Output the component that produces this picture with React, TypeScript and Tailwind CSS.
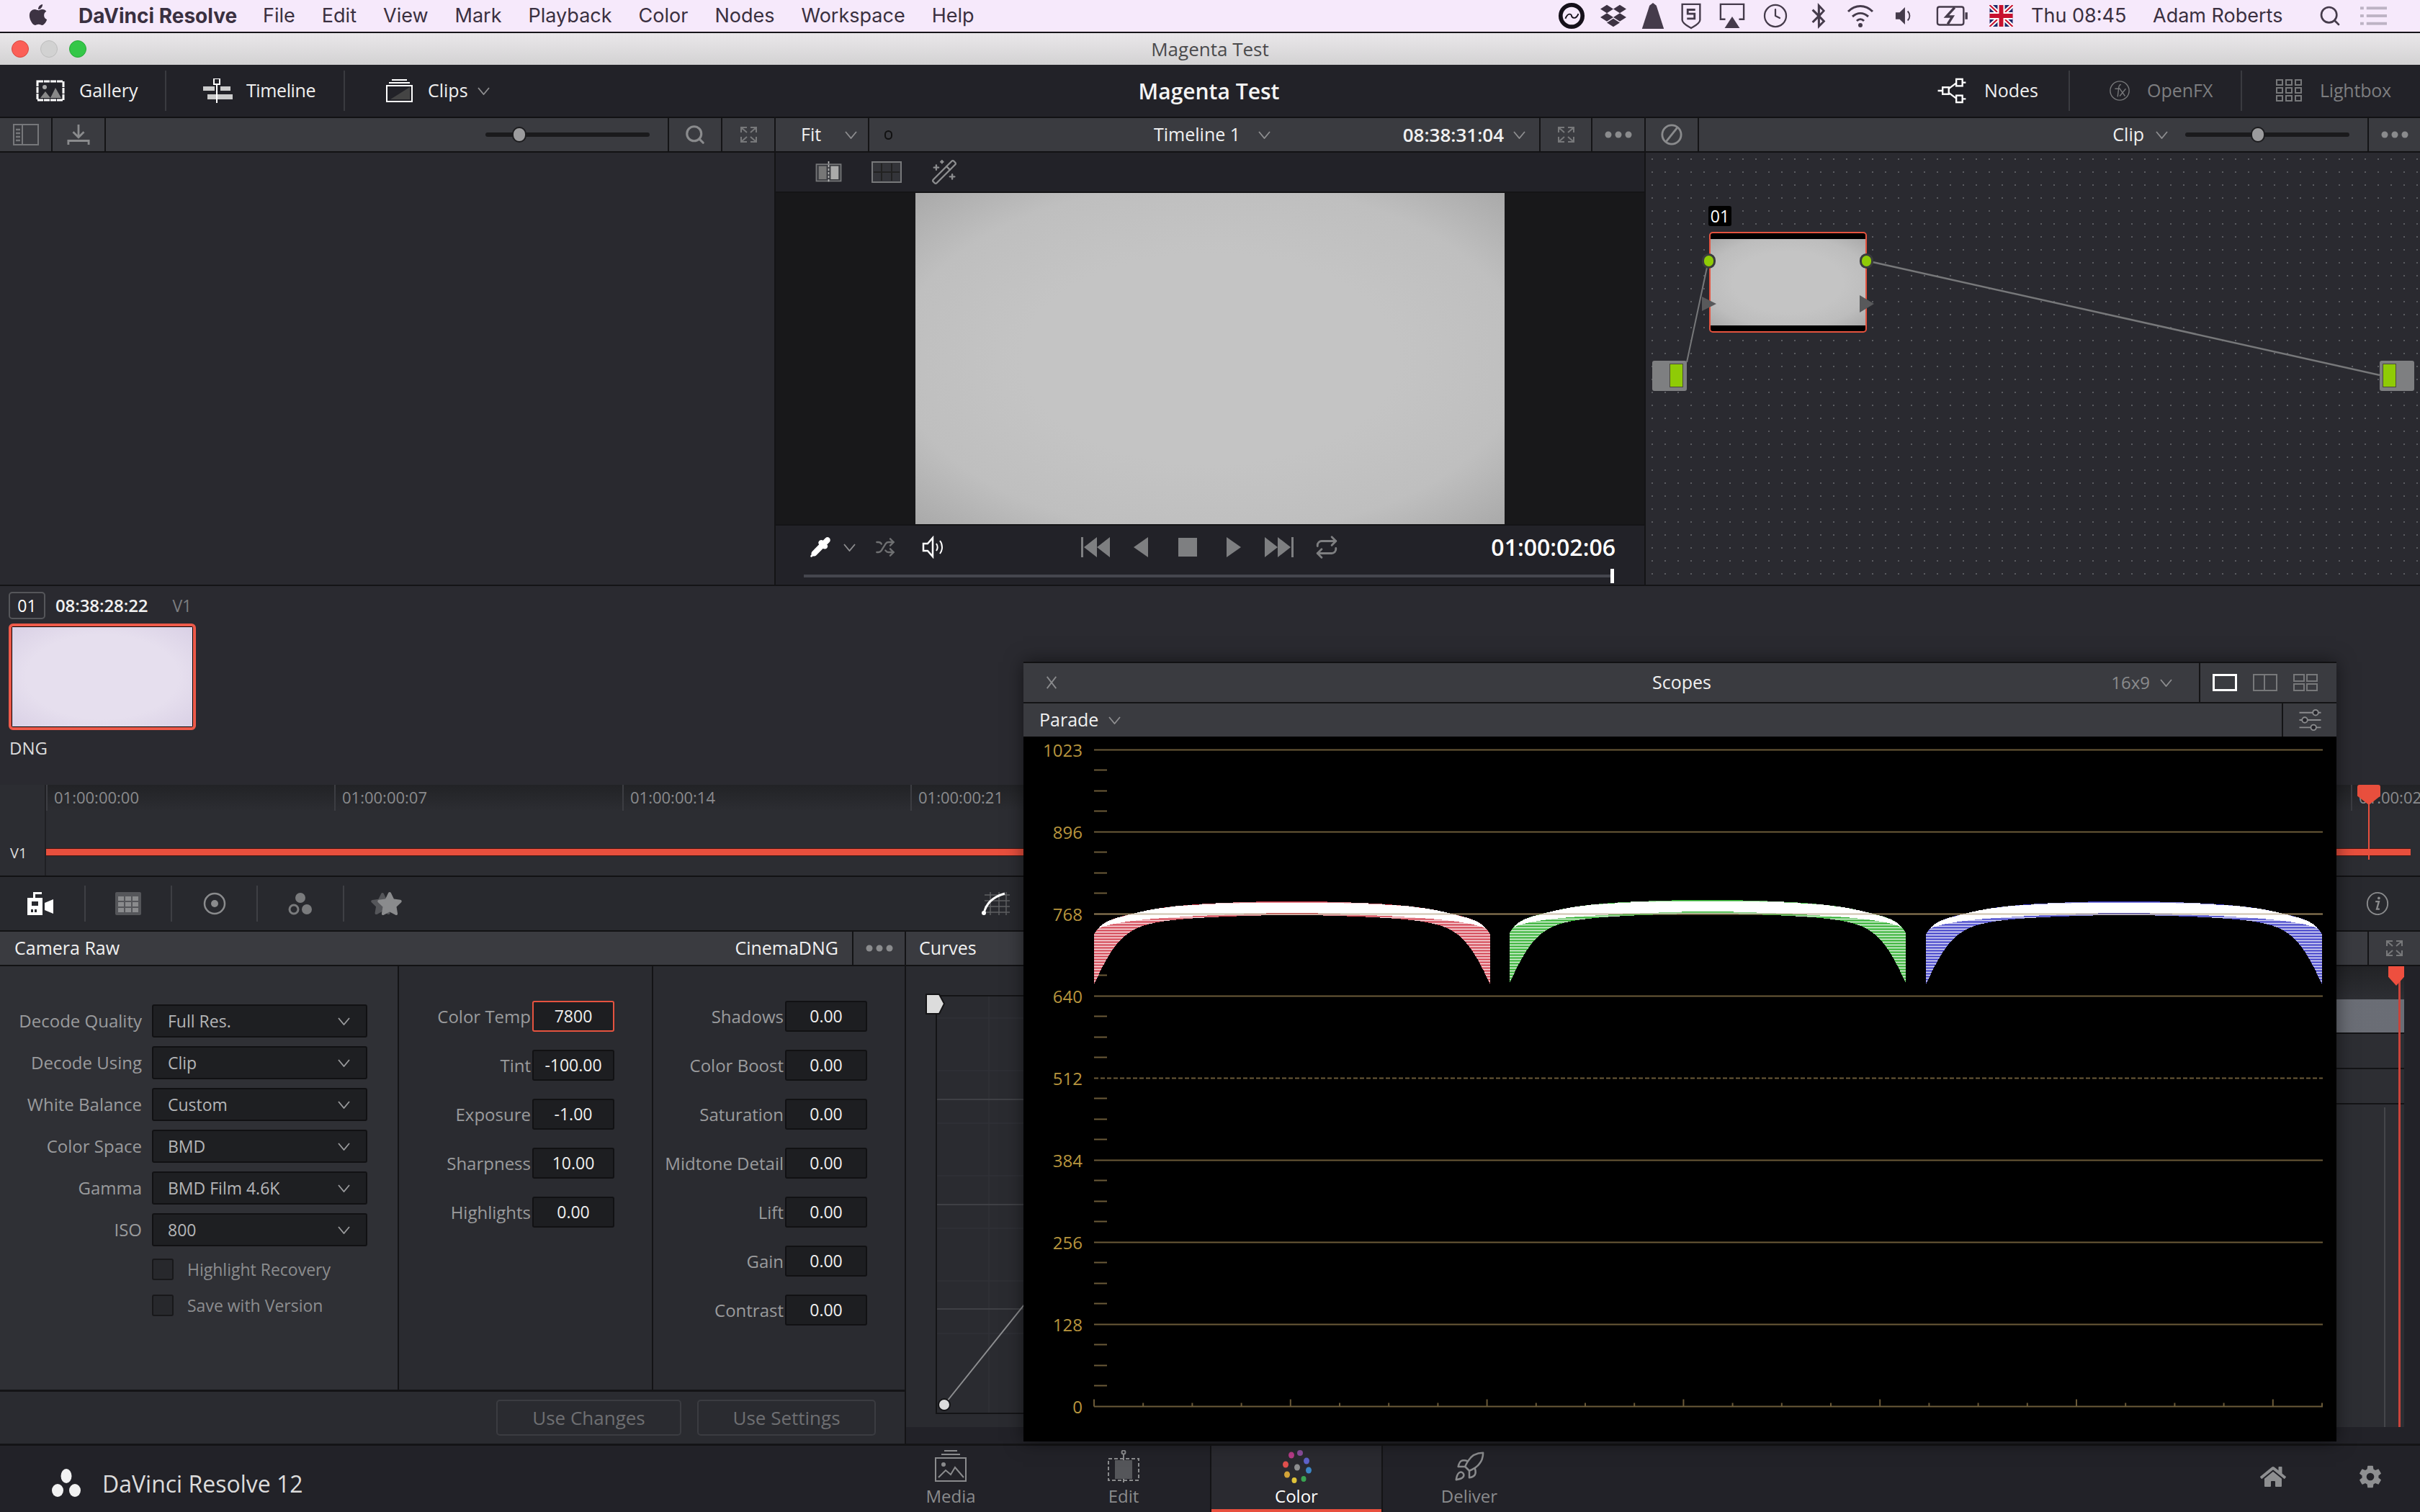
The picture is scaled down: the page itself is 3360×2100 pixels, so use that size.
import React from "react";
import { FaApple, FaDropbox, FaBluetoothB, FaHome, FaStar } from "react-icons/fa";
import { IoSettingsSharp } from "react-icons/io5";
import { Search, Shuffle, Repeat, Clock, WandSparkles, Pipette, Rocket } from "lucide-react";

const Chev = ({ className = "", color = "#8e8e90" }: { className?: string; color?: string }) => (
  <svg viewBox="0 0 17 11" className={`w-[17px] h-[11px] shrink-0 ${className}`} fill="none" stroke={color} strokeWidth="1.8"><path d="M1 1l7.5 9L16 1" /></svg>
);
const Expand = ({ className = "w-[25px] h-[24px]" }: { className?: string }) => (
  <svg viewBox="0 0 25 24" className={className} fill="none" stroke="#77787a" strokeWidth="2"><path d="M2 9V2h8M2 2l8 7M23 9V2h-8M23 2l-8 7M2 15v7h8M2 22l8-7M23 15v7h-8M23 22l-8-7" /></svg>
);
const Dots = () => (
  <svg viewBox="0 0 38 10" className="w-[38px] h-[10px]" fill="#8a8b8d"><circle cx="5" cy="5" r="4.5" /><circle cx="19" cy="5" r="4.5" /><circle cx="33" cy="5" r="4.5" /></svg>
);
const Slider = ({ className, knob }: { className: string; knob: string }) => (
  <div className={`relative h-[6px] rounded-full bg-[#1a1a1c] ${className}`}>
    <div className={`absolute top-[-8px] w-[20px] h-[22px] rounded-full bg-[#9b9b9d] border-2 border-[#1c1c1e] ${knob}`} />
  </div>
);

function MenuBar() {
  const items = ["File", "Edit", "View", "Mark", "Playback", "Color", "Nodes", "Workspace", "Help"];
  const slot = "flex items-center justify-center";
  return (
    <div className="h-[44px] shrink-0 flex items-center bg-[#f6e9fb] text-[#3a3040] font-['Inter',sans-serif] text-[27px]">
      <FaApple className="ml-[38px] w-[30px] h-[33px] mb-[3px] text-[#3d3343]" />
      <span className="ml-[41px] font-bold text-[28px]">DaVinci Resolve</span>
      <div className="flex ml-[36px] gap-[37px]">
        {items.map((m) => <span key={m}>{m}</span>)}
      </div>
      <div className="ml-auto flex items-center">
        <div className={`${slot} w-[60px]`}>
          <svg viewBox="0 0 40 40" className="w-[38px] h-[38px]" fill="none" stroke="#15101a"><circle cx="20" cy="20" r="16" strokeWidth="6" /><path d="M11 24c4-10 9-6 9-4s6 7 10-3" strokeWidth="5" stroke="#f6e9fb" /><path d="M11 24c4-10 9-6 9-4s6 7 10-3" strokeWidth="2" /></svg>
        </div>
        <div className={`${slot} w-[56px]`}><FaDropbox className="w-[36px] h-[36px] text-[#3d3343]" /></div>
        <div className={`${slot} w-[53px]`}><svg viewBox="0 0 34 40" className="w-[34px] h-[38px]" fill="#453b4b"><path d="M17 1l5 4 11 34H1L12 5z" /></svg></div>
        <div className={`${slot} w-[54px]`}>
          <svg viewBox="0 0 30 40" className="w-[30px] h-[38px]" fill="none" stroke="#453b4b" strokeWidth="2.5"><path d="M2 3h26v23c0 5-8 9-13 12C10 35 2 31 2 26z" /><path d="M21 11H10v6h10v7H9" strokeWidth="3" /></svg>
        </div>
        <div className={`${slot} w-[59px]`}>
          <svg viewBox="0 0 38 38" className="w-[36px] h-[36px]" fill="none" stroke="#453b4b" strokeWidth="2.5"><path d="M9 24H2V2h34v22h-7" /><path d="M19 20l11 17H8z" fill="#453b4b" stroke="none" /></svg>
        </div>
        <div className={`${slot} w-[61px]`}><Clock className="w-[36px] h-[38px] text-[#453b4b]" strokeWidth={1.5} /></div>
        <div className={`${slot} w-[60px]`}><FaBluetoothB className="w-[24px] h-[36px] text-[#453b4b]" /></div>
        <div className={`${slot} w-[56px]`}>
          <svg viewBox="0 0 40 36" className="w-[40px] h-[36px]" fill="none" stroke="#453b4b" strokeWidth="3"><path d="M3 12c10-10 24-10 34 0M9 19c7-6 15-6 22 0M15 25c3-3 7-3 10 0" /><circle cx="20" cy="31" r="3" fill="#453b4b" stroke="none" /></svg>
        </div>
        <div className={`${slot} w-[65px]`}>
          <svg viewBox="0 0 28 30" className="w-[26px] h-[30px]" fill="#453b4b"><path d="M1 10h6l8-8v26l-8-8H1z" /><path d="M19 8c4 4 4 10 0 14" fill="none" stroke="#453b4b" strokeWidth="2" /></svg>
        </div>
        <div className={`${slot} w-[70px]`}>
          <svg viewBox="0 0 48 32" className="w-[46px] h-[32px]" fill="none" stroke="#453b4b" strokeWidth="2.5"><rect x="2" y="3" width="38" height="26" rx="3" /><path d="M27 4L15 17h9l-7 11" strokeWidth="3.5" /><path d="M44 11v10" strokeWidth="3.5" /></svg>
        </div>
        <div className={`${slot} w-[64px]`}>
          <svg viewBox="0 0 32 30" className="w-[33px] h-[30px]"><rect width="32" height="30" fill="#1f2a6b" /><path d="M0 0l32 30M32 0L0 30" stroke="#fff" strokeWidth="6" /><path d="M0 0l32 30M32 0L0 30" stroke="#c8102e" strokeWidth="2" /><path d="M16 0v30M0 15h32" stroke="#fff" strokeWidth="10" /><path d="M16 0v30M0 15h32" stroke="#c8102e" strokeWidth="6" /></svg>
        </div>
        <span className="ml-[10px] w-[169px]">Thu 08:45</span>
        <span className="w-[230px]">Adam Roberts</span>
        <Search className="w-[32px] h-[36px] text-[#453b4b]" strokeWidth={2} />
        <svg viewBox="0 0 38 28" className="ml-[26px] mr-[46px] w-[37px] h-[28px]" fill="#bdb3c4"><rect x="0" y="1" width="5" height="4" /><rect x="0" y="12" width="5" height="4" /><rect x="0" y="23" width="5" height="4" /><rect x="9" y="1" width="29" height="4" /><rect x="9" y="12" width="29" height="4" /><rect x="9" y="23" width="29" height="4" /></svg>
      </div>
    </div>
  );
}

function TitleBar() {
  return (
    <div className="relative h-[46px] shrink-0 flex items-center justify-center border-t-2 border-[#17151a] bg-gradient-to-b from-[#eae8ea] to-[#d3d2d3] text-[#4a4a4c] text-[26px]">
      <div className="absolute left-[16px] top-[10px] flex gap-[16px]">
        <div className="w-[24px] h-[24px] rounded-full bg-[#fb5f57] border border-[#d8483f]" />
        <div className="w-[24px] h-[24px] rounded-full bg-[#d2d2d2] border border-[#bdbdbd]" />
        <div className="w-[24px] h-[24px] rounded-full bg-[#34c748] border border-[#27a838]" />
      </div>
      Magenta Test
    </div>
  );
}

function Toolbar() {
  return (
    <div className="h-[72px] shrink-0 grid grid-cols-[1fr_auto_1fr] items-center bg-[#222228] text-[25px] text-[#f0f0f0]">
      <div className="flex items-center h-[56px]">
        <div className="w-[231px] h-full flex items-center border-r-2 border-[#3a3b40] pl-[50px]">
          <svg viewBox="0 0 40 30" className="w-[40px] h-[30px]"><rect x="2" y="2" width="36" height="26" fill="#222228" stroke="#fff" strokeWidth="3" strokeDasharray="8 1" /><circle cx="12" cy="10" r="3" fill="#aaa" /><path d="M6 25l7-9 7 9zM20 25l7-14 8 14z" fill="#888" /></svg>
          <span className="ml-[20px]">Gallery</span>
        </div>
        <div className="w-[248px] h-full flex items-center border-r-2 border-[#3a3b40] pl-[50px]">
          <svg viewBox="0 0 42 34" className="w-[42px] h-[34px]"><rect x="1" y="11" width="16" height="6" fill="#ccc" /><rect x="25" y="11" width="14" height="6" fill="#ccc" /><rect x="7" y="22" width="35" height="7" fill="#ccc" /><rect x="19" y="6" width="2" height="28" fill="#fff" /><rect x="16" y="0" width="8" height="8" fill="#222228" stroke="#fff" strokeWidth="2" /></svg>
          <span className="ml-[19px] tracking-[-0.4px]">Timeline</span>
        </div>
        <div className="h-full flex items-center pl-[57px]">
          <svg viewBox="0 0 37 32" className="w-[37px] h-[32px]" fill="none" stroke="#fff" strokeWidth="2"><path d="M8 1h21M4 5h29" /><rect x="1" y="9" width="35" height="22" /><path d="M6 28l27-17v17z" fill="#444" stroke="none" /></svg>
          <span className="ml-[21px]">Clips</span>
          <Chev className="ml-[13px]" />
        </div>
      </div>
      <div className="text-[30px] font-semibold text-[#f4f4f4] pr-[3px]">Magenta Test</div>
      <div className="flex items-center justify-end h-[56px]">
        <svg viewBox="0 0 44 38" className="w-[43px] h-[36px]" fill="#222228" stroke="#fff" strokeWidth="2.5"><path d="M2 19h8M18 16l12-9M18 22l12 9M38 7h5M38 31h5" /><rect x="9" y="14" width="9" height="10" /><rect x="29" y="2" width="9" height="10" /><rect x="29" y="26" width="9" height="10" /></svg>
        <span className="ml-[24px] mr-[42px] font-medium">Nodes</span>
        <div className="w-[239px] h-full flex items-center border-l-2 border-[#3a3b40] pl-[54px] text-[#7d7e80]">
          <svg viewBox="0 0 32 32" className="w-[30px] h-[32px]" fill="none" stroke="#77787a" strokeWidth="1.5"><circle cx="16" cy="16" r="14" /><path d="M18 7c-4 0-3 4-5 18M9 13h8M16 13l8 11M25 13l-9 11" /></svg>
          <span className="ml-[23px]">OpenFX</span>
        </div>
        <div className="w-[249px] h-full flex items-center border-l-2 border-[#3a3b40] pl-[47px] text-[#7d7e80]">
          <svg viewBox="0 0 37 32" className="w-[37px] h-[32px]" fill="none" stroke="#77787a" strokeWidth="2">
            {[1, 14, 27].map((x) => [1, 12, 23].map((y) => <rect key={`${x}-${y}`} x={x} y={y} width="8" height="7" />))}
          </svg>
          <span className="ml-[24px] tracking-[-0.2px]">Lightbox</span>
        </div>
      </div>
    </div>
  );
}

const Header = ({ children, className = "" }: { children: React.ReactNode; className?: string }) => (
  <div className={`h-[50px] shrink-0 flex items-stretch border-y-2 border-[#121214] bg-[#3a3b40] text-[25px] text-[#f0f0f0] ${className}`}>{children}</div>
);
const Cell = ({ className = "", children }: { className?: string; children: React.ReactNode }) => (
  <div className={`flex items-center justify-center ${className}`}>{children}</div>
);

function Gallery() {
  return (
    <div className="w-[1075px] shrink-0 flex flex-col bg-[#29292f]">
      <Header>
        <Cell className="w-[73px] border-r-2 border-[#141416]">
          <svg viewBox="0 0 36 32" className="w-[36px] h-[32px]" fill="none" stroke="#76777a" strokeWidth="2"><rect x="1" y="2" width="34" height="28" /><path d="M13 2v28" /><path d="M4 9h6M4 14h6M4 19h6M4 24h6" strokeWidth="2.5" /></svg>
        </Cell>
        <Cell className="w-[74px] border-r-2 border-[#141416]">
          <svg viewBox="0 0 34 32" className="w-[32px] h-[32px]" fill="none" stroke="#8a8b8d" strokeWidth="3"><path d="M17 1v18M9 12l8 8 8-8M2 31v-6h30v6" /></svg>
        </Cell>
        <div className="flex-1 flex items-center pl-[527px]"><Slider className="w-[228px]" knob="left-[37px]" /></div>
        <Cell className="w-[74px] border-l-2 border-[#141416]"><Search className="w-[30px] h-[30px] text-[#8a8b8d]" strokeWidth={2.5} /></Cell>
        <Cell className="w-[74px] border-l-2 border-[#141416]"><Expand /></Cell>
      </Header>
      <div className="flex-1" />
    </div>
  );
}

function Viewer() {
  const gray = "#7e7f81";
  return (
    <div className="w-[1210px] shrink-0 flex flex-col border-x-2 border-[#141416] bg-[#222228]">
      <Header>
        <div className="w-[130px] flex items-center border-r-2 border-[#141416] pl-[35px]">
          <span>Fit</span><Chev className="ml-[33px]" />
        </div>
        <div className="flex-1 flex items-center pl-[21px]">
          <div className="w-[11px] h-[13px] rounded-full border-2 border-[#111]" />
          <span className="ml-[363px]">Timeline 1</span>
          <Chev className="ml-[25px]" />
          <span className="ml-auto font-semibold text-[26px]">08:38:31:04</span>
          <Chev className="ml-[13px] mr-[19px]" />
        </div>
        <Cell className="w-[74px] border-x-2 border-[#141416]"><Expand /></Cell>
        <Cell className="w-[72px]"><Dots /></Cell>
      </Header>
      <div className="h-[56px] shrink-0 flex items-center pl-[52px] border-b-2 border-[#141416]">
        <svg viewBox="0 0 43 36" className="w-[43px] h-[30px]" fill="none"><rect x="1" y="5" width="41" height="28" fill="#3a3b40" stroke="#77787a" strokeWidth="2" /><rect x="5" y="8" width="13" height="22" fill="#777" /><rect x="25" y="8" width="13" height="22" fill="#aaa" /><path d="M21.5 0v36" stroke="#bbb" strokeWidth="2" strokeDasharray="4 2" /></svg>
        <svg viewBox="0 0 42 30" className="ml-[38px] w-[42px] h-[30px]" fill="none" stroke="#77787a" strokeWidth="2"><rect x="1" y="1" width="40" height="28" fill="#333439" /><path d="M14 3v24M28 3v24M3 15h36" stroke="#222" /></svg>
        <WandSparkles className="ml-[39px] w-[40px] h-[38px] text-[#8c8d8f]" strokeWidth={1.5} />
      </div>
      <div className="h-[460px] shrink-0 flex justify-center bg-[#18181a]">
        <div className="w-[818px] h-full bg-[radial-gradient(ellipse_at_center,#c4c4c4_45%,#bfbfbf_75%,#a9a9a9_100%)]" />
      </div>
      <div className="flex-1 flex flex-col border-t-2 border-[#141416]">
        <div className="h-[60px] flex items-center">
          <Pipette className="ml-[47px] w-[30px] h-[32px] text-white" fill="#fff" strokeWidth={2} />
          <Chev className="ml-[17px]" />
          <Shuffle className="ml-[26px] w-[30px] h-[28px] text-[#6f7072]" strokeWidth={2} />
          <svg viewBox="0 0 31 32" className="ml-[36px] w-[31px] h-[32px]" fill="none" stroke="#fff" strokeWidth="2.5"><path d="M2 11h6l7-8v26l-7-8H2z" /><path d="M20 11c2 3 2 7 0 10M25 7c4 5 4 13 0 18" strokeWidth="2" /></svg>
          <svg viewBox="0 0 40 28" className="ml-[190px] w-[40px] h-[28px]" fill={gray}><rect x="0" y="0" width="3" height="28" /><path d="M4 14L22 0v28zM22 14L40 0v28z" /></svg>
          <svg viewBox="0 0 20 28" className="ml-[33px] w-[20px] h-[28px]" fill={gray}><path d="M0 14L20 0v28z" /></svg>
          <div className="ml-[42px] w-[26px] h-[26px] bg-[#7e7f81]" />
          <svg viewBox="0 0 20 28" className="ml-[41px] w-[20px] h-[28px]" fill={gray}><path d="M20 14L0 0v28z" /></svg>
          <svg viewBox="0 0 40 28" className="ml-[33px] w-[40px] h-[28px]" fill={gray}><rect x="37" y="0" width="3" height="28" /><path d="M36 14L18 0v28zM18 14L0 0v28z" /></svg>
          <Repeat className="ml-[28px] w-[36px] h-[34px] text-[#7e7f81]" strokeWidth={2} />
          <span className="ml-auto mr-[40px] font-semibold text-[32px] text-white">01:00:02:06</span>
        </div>
        <div className="flex items-center pl-[39px]">
          <div className="w-[1120px] h-[4px] bg-[#45464e]" />
          <div className="w-[5px] h-[20px] bg-white" />
        </div>
      </div>
    </div>
  );
}

function Nodes() {
  return (
    <div className="flex-1 flex flex-col bg-[#2a2a30]">
      <Header>
        <Cell className="w-[74px] border-r-2 border-[#141416]">
          <svg viewBox="0 0 32 32" className="w-[30px] h-[32px]" fill="none" stroke="#8a8b8d" strokeWidth="3"><circle cx="16" cy="16" r="14" /><path d="M8 26L24 6" /></svg>
        </Cell>
        <div className="flex-1 flex items-center justify-end">
          <span className="mr-[16px]">Clip</span>
          <Chev className="mr-[24px]" />
          <Slider className="w-[228px]" knob="left-[91px]" />
          <div className="w-[25px]" />
        </div>
        <Cell className="w-[73px] border-l-2 border-[#141416]"><Dots /></Cell>
      </Header>
      <div className="relative flex-1 bg-[radial-gradient(circle,#5b5c61_1px,transparent_1.5px)] bg-[size:18px_18px]">
        <svg className="absolute inset-0 w-full h-full" fill="none" stroke="#77787a" strokeWidth="2">
          <path d="M57 291L87 150" />
          <path d="M306 150L1019 309" strokeWidth="2.5" />
        </svg>
        <div className="absolute left-[87px] top-[74px] w-[32px] h-[28px] bg-black rounded-[3px] flex items-center justify-center text-white text-[23px]">01</div>
        <div className="absolute left-[88px] top-[110px] w-[219px] h-[140px] rounded-[5px] border-2 border-[#e5533f] bg-black py-[8px]">
          <div className="h-full bg-[radial-gradient(ellipse_at_center,#c4c4c4_50%,#bdbdbd_75%,#a9a9a9_100%)]" />
        </div>
        <div className="absolute left-[78px] top-[140px] w-[19px] h-[21px] rounded-full bg-[#8fcb06] border-[3px] border-[#3a3b3d]" />
        <div className="absolute left-[297px] top-[140px] w-[19px] h-[21px] rounded-full bg-[#8fcb06] border-[3px] border-[#3a3b3d]" />
        <svg viewBox="0 0 20 24" className="absolute left-[78px] top-[198px] w-[20px] h-[24px]" fill="#58595b"><path d="M0 2l20 10L0 22z" /></svg>
        <svg viewBox="0 0 20 24" className="absolute left-[297px] top-[198px] w-[20px] h-[24px]" fill="#58595b"><path d="M0 0l20 12L0 24z" /></svg>
        <div className="absolute left-[9px] top-[289px] w-[48px] h-[42px] rounded-[3px] bg-[#7e7f81]">
          <div className="ml-[24px] mt-[4px] w-[19px] h-[33px] bg-[#8fcb06] border border-[#4a4b3a]" />
        </div>
        <div className="absolute left-[1019px] top-[289px] w-[48px] h-[42px] rounded-[3px] bg-[#7e7f81]">
          <div className="ml-[4px] mt-[4px] w-[19px] h-[33px] bg-[#8fcb06] border border-[#4a4b3a]" />
        </div>
      </div>
    </div>
  );
}

function ClipArea() {
  return (
    <div className="h-[278px] shrink-0 border-t-2 border-[#141416] bg-[#2a2a30] pl-[12px] pt-[8px]">
      <div className="flex items-center h-[38px] text-[23px]">
        <div className="w-[51px] h-[38px] rounded-[5px] border-2 border-[#55565a] flex items-center justify-center text-white">01</div>
        <span className="ml-[14px] font-semibold text-[24px] text-[#f0f0f0] tracking-[-0.1px]">08:38:28:22</span>
        <span className="ml-[34px] text-[#7d7e80]">V1</span>
      </div>
      <div className="mt-[6px] w-[260px] h-[148px] rounded-[6px] border-[4px] border-[#ee5a4a] bg-black p-[1px]">
        <div className="w-full h-full bg-[radial-gradient(ellipse_at_center,#e6dfee_60%,#d9d0e5_100%)]" />
      </div>
      <div className="mt-[7px] pl-[1px] text-[24px] text-[#dcdcdc]">DNG</div>
    </div>
  );
}

function Timeline() {
  const labels = ["01:00:00:00", "01:00:00:07", "01:00:00:14", "01:00:00:21", "01:00:01:04", "01:00:01:11", "01:00:01:18", "01:00:02:01", "01:00:02:08"];
  return (
    <div className="relative h-[128px] shrink-0 flex bg-[#2c2d32] border-b-[2px] border-[#121214]">
      <div className="w-[64px] shrink-0 flex flex-col justify-end border-r-2 border-[#202024] pb-[16px] pl-[14px] text-[20px] text-[#dcdcdc]">V1</div>
      <div className="flex-1 flex flex-col overflow-hidden">
        <div className="h-[36px] flex bg-gradient-to-b from-[#222326] to-[#2c2d32] text-[22px] text-[#8a8b8d]">
          {labels.map((l) => <div key={l} className="w-[400px] shrink-0 pl-[9px] border-l-2 border-[#3c3d42] leading-[34px]">{l}</div>)}
        </div>
        <div className="mt-[52px] mr-[13px] h-[11px] bg-[#e84f3d] border-y border-[#451713]" />
      </div>
      <div className="absolute left-[3273px] top-[0px] w-[32px] h-[28px] bg-[#e84f3d] rounded-t-[3px] [clip-path:polygon(0_0,100%_0,100%_55%,50%_100%,0_55%)]" />
      <div className="absolute left-[3288px] top-[24px] w-[2px] h-[80px] bg-[#e84f3d]" />
    </div>
  );
}

function Palette() {
  return (
    <div className="h-[74px] shrink-0 flex items-center bg-[#28292e]">
      <div className="w-[119px] h-[50px] flex items-center justify-center border-r-2 border-[#3e3f44]">
        <svg viewBox="0 0 46 32" className="w-[46px] h-[32px] ml-[4px]" fill="#fff"><path d="M8 0h12v3H11v5h10v24H0V8h8z" /><path d="M24 15l12-5v20l-12-5z" /><rect x="6" y="13" width="9" height="6" fill="#28292e" /><rect x="5" y="24" width="3" height="4" fill="#28292e" /><rect x="10" y="24" width="3" height="4" fill="#28292e" /></svg>
      </div>
      <div className="w-[120px] h-[50px] flex items-center justify-center border-r-2 border-[#3e3f44]">
        <svg viewBox="0 0 36 32" className="w-[36px] h-[32px]" fill="#8a8b8d"><rect width="36" height="32" rx="2" fill="#55565a" /><rect x="4" y="6" width="8" height="6" /><rect x="14" y="6" width="8" height="6" /><rect x="24" y="6" width="8" height="6" /><rect x="4" y="14" width="8" height="6" /><rect x="14" y="14" width="8" height="6" /><rect x="24" y="14" width="8" height="6" /><rect x="4" y="22" width="8" height="6" /><rect x="14" y="22" width="8" height="6" /><rect x="24" y="22" width="8" height="6" /></svg>
      </div>
      <div className="w-[119px] h-[50px] flex items-center justify-center border-r-2 border-[#3e3f44]">
        <svg viewBox="0 0 32 32" className="w-[32px] h-[32px]" fill="none" stroke="#8a8b8d" strokeWidth="2.5"><circle cx="16" cy="16" r="14" /><circle cx="16" cy="16" r="5" fill="#8a8b8d" stroke="none" /></svg>
      </div>
      <div className="w-[120px] h-[50px] flex items-center justify-center border-r-2 border-[#3e3f44]">
        <svg viewBox="0 0 36 32" className="w-[36px] h-[32px]" fill="#7a7b7d"><circle cx="18" cy="8" r="7" /><circle cx="9" cy="24" r="6" fill="none" stroke="#7a7b7d" strokeWidth="3" /><circle cx="27" cy="24" r="7" /></svg>
      </div>
      <div className="relative w-[120px] flex items-center justify-center">
        <FaStar className="absolute left-[36px] w-[34px] h-[32px] text-[#55565a]" />
        <FaStar className="relative ml-[6px] w-[36px] h-[34px] text-[#8a8b8d]" />
      </div>
      <div className="ml-[763px] w-[41px] h-[32px]">
        <svg viewBox="0 0 41 32" className="w-[41px] h-[32px]" fill="none"><path d="M6 4h35M6 12h35M6 20h35M6 28h35M14 0v32M26 0v32M36 0v32" stroke="#5e5f62" strokeWidth="1.5" /><path d="M5 30C8 14 20 6 34 2" stroke="#fff" strokeWidth="3" /><circle cx="5" cy="29" r="3" fill="#fff" /></svg>
      </div>
      <svg viewBox="0 0 32 36" className="ml-auto mr-[43px] w-[32px] h-[34px]" fill="none" stroke="#8a8b8d" strokeWidth="2"><ellipse cx="16" cy="18" rx="15" ry="16" /><circle cx="18" cy="10" r="2" fill="#8a8b8d" stroke="none" /><path d="M13 15h5l-3 11h4" strokeWidth="2.5" /></svg>
    </div>
  );
}

const Dropdown = ({ label, value }: { label: string; value: string }) => (
  <div className="flex items-center">
    <span className="w-[197px] text-right text-[#9a9b9d] text-[24px] whitespace-nowrap">{label}</span>
    <div className="ml-[14px] w-[299px] h-[46px] flex items-center justify-between pl-[20px] pr-[22px] rounded-[3px] border-2 border-[#111113] bg-[#1e1f22] text-[23px] text-[#b4b5b7]">
      <span>{value}</span>
      <Chev color="#9a9b9d" />
    </div>
  </div>
);
const Check = ({ label }: { label: string }) => (
  <div className="h-[30px] flex items-center pl-[211px]">
    <div className="w-[30px] h-[30px] rounded-[3px] border-2 border-[#18181a] bg-[#27282c]" />
    <span className="ml-[19px] text-[23px] text-[#8c8d8f]">{label}</span>
  </div>
);
const Num = ({ label, value, active = false, width }: { label: string; value: string; active?: boolean; width: string }) => (
  <div className="flex items-center">
    <span className={`${width} text-right text-[24px] text-[#9a9b9d] whitespace-nowrap`}>{label}</span>
    <div className={`ml-[2px] w-[114px] h-[43px] rounded-[3px] border-2 flex items-center justify-center text-[23px] text-[#eeeeee] bg-[#1d1e21] ${active ? "border-[#e5533f]" : "border-[#111113]"}`}>{value}</div>
  </div>
);

function CameraRaw() {
  return (
    <div className="w-[1258px] shrink-0 flex flex-col bg-[#2a2b30] border-r-2 border-[#141416]">
      <Header>
        <div className="flex-1 flex items-center pl-[20px]">Camera Raw</div>
        <div className="flex items-center pr-[19px]">CinemaDNG</div>
        <Cell className="w-[73px] border-l-2 border-[#141416]"><Dots /></Cell>
      </Header>
      <div className="flex-1 flex">
        <div className="w-[554px] shrink-0 border-r-2 border-[#141416] flex flex-col bg-[#2f3035] pt-[53px]">
          <div className="flex flex-col gap-[12px]">
            <Dropdown label="Decode Quality" value="Full Res." />
            <Dropdown label="Decode Using" value="Clip" />
            <Dropdown label="White Balance" value="Custom" />
            <Dropdown label="Color Space" value="BMD" />
            <Dropdown label="Gamma" value="BMD Film 4.6K" />
            <Dropdown label="ISO" value="800" />
          </div>
          <div className="mt-[17px] flex flex-col gap-[20px]">
            <Check label="Highlight Recovery" />
            <Check label="Save with Version" />
          </div>
        </div>
        <div className="w-[353px] shrink-0 border-r-2 border-[#141416] flex flex-col gap-[25px] pt-[48px]">
          <Num width="w-[183px]" label="Color Temp" value="7800" active />
          <Num width="w-[183px]" label="Tint" value="-100.00" />
          <Num width="w-[183px]" label="Exposure" value="-1.00" />
          <Num width="w-[183px]" label="Sharpness" value="10.00" />
          <Num width="w-[183px]" label="Highlights" value="0.00" />
        </div>
        <div className="flex-1 flex flex-col gap-[25px] pt-[48px]">
          <Num width="w-[181px]" label="Shadows" value="0.00" />
          <Num width="w-[181px]" label="Color Boost" value="0.00" />
          <Num width="w-[181px]" label="Saturation" value="0.00" />
          <Num width="w-[181px]" label="Midtone Detail" value="0.00" />
          <Num width="w-[181px]" label="Lift" value="0.00" />
          <Num width="w-[181px]" label="Gain" value="0.00" />
          <Num width="w-[181px]" label="Contrast" value="0.00" />
        </div>
      </div>
      <div className="h-[75px] shrink-0 flex items-center justify-end pr-[40px] gap-[22px] border-t-[3px] border-[#141416] bg-[#2a2b30] text-[26px] text-[#6e6f72]">
        <div className="w-[257px] h-[50px] rounded-[5px] border-2 border-[#3b3c41] flex items-center justify-center">Use Changes</div>
        <div className="w-[248px] h-[50px] rounded-[5px] border-2 border-[#3b3c41] flex items-center justify-center">Use Settings</div>
      </div>
    </div>
  );
}

function CurvesPanel() {
  return (
    <div className="flex-1 flex flex-col bg-[#222228]">
      <Header>
        <div className="flex-1 flex items-center pl-[18px]">Curves</div>
        <div className="w-[70px] flex items-center"><div className="w-[18px] h-[6px] bg-[#1a1a1c] rounded-r-full" /></div>
        <Cell className="w-[73px] border-l-2 border-[#141416]"><Expand /></Cell>
      </Header>
      <div className="flex-1 flex pr-[22px] pb-[23px]">
        <div className="w-[1000px] shrink-0 bg-[#2a2b30]">
          <svg viewBox="0 0 1000 640" className="w-[1000px] h-[640px]" fill="none">
            <g stroke="#313237" strokeWidth="1.5">
              {[72, 145, 218, 291, 364, 437, 510].map((y) => <path key={y} d={`M42 ${y}H1000`} />)}
              {[115, 188, 260, 332, 405, 478].map((x) => <path key={x} d={`M${x} 41V620`} />)}
            </g>
            <g stroke="#3f4045" strokeWidth="2">
              <path d="M42 185H1000M42 331H1000M42 476H1000" />
            </g>
            <path d="M42 41H1000M42 41V621H1000" stroke="#141416" strokeWidth="2" />
            <path d="M53 609L300 300" stroke="#8e8f91" strokeWidth="2" />
            <path d="M28 39h18l7 13-7 14H28z" fill="#dcdcdc" stroke="#141416" strokeWidth="2" />
            <circle cx="53" cy="609" r="8" fill="#dcdcdc" stroke="#141416" strokeWidth="2" />
          </svg>
        </div>
        <div className="relative flex-1 flex flex-col bg-[#2d2e33]">
          <div className="h-[46px] bg-gradient-to-b from-[#222326] to-[#2d2e33]" />
          <div className="h-[48px] bg-gradient-to-r from-[#70737b] to-[#6a6d75] border-b-2 border-[#141416]" />
          <div className="h-[49px] border-b-2 border-[#141416]" />
          <div className="h-[49px] border-b-2 border-[#141416]" />
          <div className="absolute right-[26px] top-[196px] bottom-0 w-[2px] bg-[#45464a]" />
          <div className="absolute right-[5px] top-0 bottom-0 w-[3px] bg-[#c9433a]" />
          <div className="absolute right-0 top-0 w-[22px] h-[27px] bg-[#ee4f3f] [clip-path:polygon(0_0,100%_0,100%_55%,50%_100%,0_55%)]" />
        </div>
      </div>
    </div>
  );
}

const TRACE_BODY = "M0 118L0 48C10 30 25 26 60 18C100 8 150 4 275 2C400 4 450 8 490 18C525 26 540 30 550 48L550 118C535 85 520 55 495 42C470 28 420 24 275 21C130 24 80 28 55 42C30 55 15 85 0 118Z";
const TRACE_BAND = "M6 40C16 28 30 26 60 18C100 8 150 5 275 4C400 5 450 8 490 18C520 26 534 28 544 40C520 30 470 23 275 18C80 23 30 30 6 40Z";

const Trace = ({ x, y, fill, id }: { x: number; y: number; fill: string; id: string }) => (
  <g transform={`translate(${x} ${y})`} shapeRendering="crispEdges">
    <path d={TRACE_BODY} fill={fill} />
    <path d={TRACE_BODY} fill={`url(#${id})`} />
    <path d={TRACE_BAND} fill="#fff" />
  </g>
);

function Scopes() {
  const majors = [
    ["1023", 18], ["896", 132], ["768", 246], ["640", 360], ["512", 474], ["384", 588], ["256", 702], ["128", 816],
  ] as [string, number][];
  return (
    <div className="absolute left-[1421px] top-[919px] w-[1823px] h-[1083px] flex flex-col border-t-2 border-[#111113] bg-black shadow-[0_0_24px_rgba(0,0,0,0.5)]">
      <div className="relative h-[56px] shrink-0 flex items-center bg-[#3a3b40] border-b-2 border-[#141416] text-[25px]">
        <svg viewBox="0 0 16 20" className="ml-[31px] w-[16px] h-[18px]" fill="none" stroke="#8a8b8d" strokeWidth="2"><path d="M1 1l14 18M15 1L1 19" /></svg>
        <span className="absolute left-[873px] text-[#f0f0f0]">Scopes</span>
        <span className="ml-auto text-[#8a8b8d] text-[24px]">16x9</span>
        <Chev className="ml-[14px] mr-[37px]" />
        <div className="h-full w-[191px] flex items-center border-l-2 border-[#141416] pl-[17px] gap-[22px]">
          <div className="w-[34px] h-[24px] border-[3px] border-white" />
          <div className="w-[34px] h-[24px] border-2 border-[#77787a] flex"><div className="w-1/2 border-r-2 border-[#77787a]" /></div>
          <svg viewBox="0 0 34 24" className="w-[34px] h-[24px]" fill="none" stroke="#77787a" strokeWidth="2"><rect x="1" y="1" width="14" height="9" /><rect x="19" y="1" width="14" height="9" /><rect x="1" y="14" width="14" height="9" /><rect x="19" y="14" width="14" height="9" /></svg>
        </div>
      </div>
      <div className="h-[46px] shrink-0 flex items-center bg-[#3a3b40] text-[25px] text-[#f0f0f0]">
        <span className="ml-[22px]">Parade</span>
        <Chev className="ml-[14px]" />
        <div className="ml-auto h-full w-[76px] flex items-center justify-center border-l-2 border-[#141416]">
          <svg viewBox="0 0 34 32" className="w-[33px] h-[30px]" fill="#222228" stroke="#8a8b8d" strokeWidth="2"><path d="M1 5h32M1 16h32M1 27h32" /><circle cx="25" cy="5" r="4" /><circle cx="9" cy="16" r="4" /><circle cx="22" cy="27" r="4" /></svg>
        </div>
      </div>
      <svg viewBox="0 0 1823 978" className="flex-1 w-full h-[978px]" fill="none">
        <defs>
          <pattern id="stripes" width="4" height="4" patternUnits="userSpaceOnUse"><rect width="4" height="2" fill="#fff" fillOpacity="0.75" /></pattern>
        </defs>
        <g stroke="#6b5a38" strokeWidth="2">
          {majors.map(([l, y]) => <path key={l} d={`M98 ${y}H1804`} strokeDasharray={l === "512" ? "6 3" : undefined} />)}
          {majors.map(([l, y]) => [28, 57, 85].map((d) => <path key={`${l}${d}`} d={`M98 ${y + d}H116`} />))}
          <path d="M98 930H1804" />
          {Array.from({ length: 26 }, (_, i) => 98 + i * 68.2).map((x, i) => <path key={x} d={`M${x} 930v${i % 4 === 0 ? -10 : -5}`} />)}
        </g>
        <Trace x={98} y={226} fill="#d2404f" id="stripes" />
        <Trace x={675} y={224} fill="#2fb02f" id="stripes" />
        <Trace x={1253} y={226} fill="#3d3dc8" id="stripes" />
        <path d="M98 246H1804" stroke="#a5906a" strokeOpacity="0.55" strokeWidth="2" />
        {majors.map(([l, y]) => <text key={l} x="82" y={y + 9} textAnchor="end" fill="#b8953e" fontSize="24" fontFamily="'Open Sans', sans-serif">{l}</text>)}
        <text x="82" y="939" textAnchor="end" fill="#b8953e" fontSize="24" fontFamily="'Open Sans', sans-serif">0</text>
      </svg>
    </div>
  );
}

function Footer() {
  const tab = "w-[240px] h-full flex flex-col items-center justify-start pt-[6px] text-[24px] text-[#8a8b8d]";
  return (
    <div className="h-[95px] shrink-0 flex border-t-[3px] border-[#141416] bg-[#222228]">
      <div className="w-[1200px] shrink-0 flex items-center pl-[72px] pt-[14px] text-[32px] text-[#dcdcdc]">
        <svg viewBox="0 0 40 40" className="w-[40px] h-[40px] mb-[2px]" fill="#f2f2f2"><ellipse cx="20" cy="10" rx="7.5" ry="10" /><ellipse cx="8" cy="30" rx="8" ry="9" /><ellipse cx="32" cy="30" rx="8" ry="9" /></svg>
        <span className="ml-[30px]">DaVinci Resolve 12</span>
      </div>
      <div className={tab}>
        <svg viewBox="0 0 46 46" className="w-[46px] h-[46px]" fill="none" stroke="#8a8b8d" strokeWidth="2"><path d="M14 1h18M10 6h26" /><rect x="2" y="11" width="42" height="32" /><circle cx="13" cy="20" r="3" fill="#8a8b8d" stroke="none" /><path d="M6 38l10-10 7 6 6-10 12 14" /></svg>
        <span>Media</span>
      </div>
      <div className={tab}>
        <svg viewBox="0 0 46 46" className="w-[46px] h-[46px]" fill="none" stroke="#8a8b8d" strokeWidth="2"><circle cx="23" cy="3" r="2.5" /><path d="M23 5v40" /><rect x="2" y="12" width="42" height="30" strokeDasharray="5 3" /><rect x="11" y="14" width="24" height="26" fill="#55565a" stroke="none" /></svg>
        <span>Edit</span>
      </div>
      <div className={`${tab} border-x-2 border-[#141416] bg-[#2a2a30] text-white relative`}>
        <svg viewBox="0 0 46 46" className="w-[46px] h-[46px]">
          <ellipse cx="28" cy="4" rx="4" ry="4" fill="#8a4d9c" /><ellipse cx="16" cy="7" rx="4" ry="4.5" fill="#b63b87" />
          <ellipse cx="37" cy="15" rx="4" ry="4.5" fill="#5f62c9" /><ellipse cx="8" cy="20" rx="4" ry="4.5" fill="#e0504e" />
          <ellipse cx="24" cy="24" rx="4" ry="4.5" fill="#8e8f91" /><ellipse cx="40" cy="28" rx="4" ry="4.5" fill="#3c86c6" />
          <ellipse cx="10" cy="34" rx="4" ry="4.5" fill="#d3a338" /><ellipse cx="20" cy="42" rx="3.5" ry="4" fill="#e0c43a" /><ellipse cx="33" cy="40" rx="3.5" ry="4" fill="#3aa552" />
        </svg>
        <span>Color</span>
        <div className="absolute left-0 right-0 bottom-0 h-[4px] bg-[#e84f3d]" />
      </div>
      <div className={tab}>
        <Rocket className="w-[46px] h-[46px] text-[#8a8b8d]" strokeWidth={1.3} />
        <span>Deliver</span>
      </div>
      <div className="flex-1 flex items-center justify-end pb-[6px]">
        <FaHome className="w-[36px] h-[34px] text-[#8e8f91]" />
        <IoSettingsSharp className="ml-[100px] mr-[52px] w-[34px] h-[36px] text-[#8e8f91]" />
      </div>
    </div>
  );
}

export default function App() {
  return (
    <div className="relative w-[3360px] h-[2100px] flex flex-col overflow-hidden whitespace-nowrap bg-[#222228] font-['Open_Sans',sans-serif]">
      <MenuBar />
      <TitleBar />
      <Toolbar />
      <div className="h-[650px] shrink-0 flex">
        <Gallery />
        <Viewer />
        <Nodes />
      </div>
      <ClipArea />
      <Timeline />
      <Palette />
      <div className="flex-1 flex min-h-0">
        <CameraRaw />
        <CurvesPanel />
      </div>
      <Footer />
      <Scopes />
    </div>
  );
}
